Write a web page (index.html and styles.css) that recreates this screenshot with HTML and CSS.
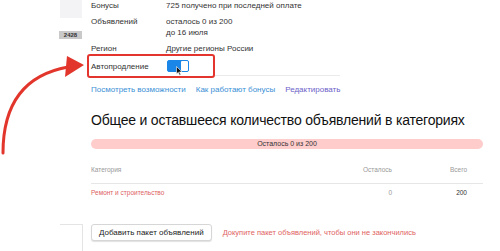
FILE: index.html
```html
<!DOCTYPE html>
<html lang="ru">
<head>
    <meta charset="UTF-8">
    <title>Пакет объявлений</title>
    <link rel="stylesheet" href="styles.css">
</head>
<body>
    <div class="sidebar">
        <div class="side-block"></div>
        <div class="side-badge">2428</div>
        <div class="side-frame"></div>
    </div>

    <div class="main">
        <div class="info">
            <div class="info-row">
                <div class="info-label">Бонусы</div>
                <div class="info-value">725 получено при последней оплате</div>
            </div>
            <div class="info-row">
                <div class="info-label">Объявлений</div>
                <div class="info-value">осталось 0 из 200<br>до 16 июля</div>
            </div>
            <div class="info-row">
                <div class="info-label">Регион</div>
                <div class="info-value">Другие регионы России</div>
            </div>
            <div class="info-row autoprolong">
                <div class="info-label">Автопродление</div>
                <div class="toggle">
                    <span class="toggle-knob"></span>
                    <svg class="cursor" width="7" height="10" viewBox="0 0 7 10">
                        <path d="M0.5 0.5 L0.5 8 L2.3 6.3 L3.6 9.3 L4.8 8.8 L3.5 5.9 L6 5.9 Z" fill="#111" stroke="#fff" stroke-width="0.6"/>
                    </svg>
                </div>
            </div>
            <div class="info-line"></div>
        </div>

        <div class="links">
            <a href="#" class="link">Посмотреть возможности</a>
            <a href="#" class="link">Как работают бонусы</a>
            <a href="#" class="link visited">Редактировать</a>
        </div>

        <h2 class="title">Общее и оставшееся количество объявлений в категориях</h2>

        <div class="bar">Осталось 0 из 200</div>

        <div class="table">
            <div class="table-head">
                <span class="col-name">Категория</span>
                <span class="col-left">Осталось</span>
                <span class="col-total">Всего</span>
            </div>
            <div class="table-row">
                <span class="col-name category">Ремонт и строительство</span>
                <span class="col-left">0</span>
                <span class="col-total total">200</span>
            </div>
        </div>

        <div class="actions">
            <button class="add-button">Добавить пакет объявлений</button>
            <a href="#" class="buy-link">Докупите пакет объявлений, чтобы они не закончились</a>
        </div>
    </div>

    <svg class="arrow" width="100" height="160" viewBox="0 0 100 160">
        <path d="M3 153 C 3 112, 18 76, 68 67" fill="none" stroke="#e2362c" stroke-width="3" stroke-linecap="round"/>
        <polygon points="84,65 67,56 65,77" fill="#e2362c"/>
    </svg>
</body>
</html>
```

FILE: styles.css
```css
body {
    font-family: 'Liberation Sans', Arial, sans-serif;
    margin: 0;
    display: flex;
    height: 251px;
    background: #fff;
    color: #333;
    overflow: hidden;
}

.sidebar {
    width: 91px;
    flex-shrink: 0;
    display: flex;
    flex-direction: column;
}

.side-block {
    margin-left: 60px;
    width: 22px;
    height: 18px;
    background-color: #f3f3f6;
}

.side-badge {
    margin: 13px 0 0 59px;
    width: 23px;
    height: 8px;
    line-height: 8px;
    font-size: 6px;
    font-weight: bold;
    text-align: center;
    background-color: #c9c9c9;
    color: #333;
}

.side-frame {
    margin: auto 0 0 60px;
    width: 22px;
    height: 26px;
    border-top: 1px solid #e4e4e4;
    border-right: 1px solid #e4e4e4;
}

.main {
    width: 392px;
    display: flex;
    flex-direction: column;
}

.info {
    display: flex;
    flex-direction: column;
    gap: 5px;
    font-size: 8px;
    line-height: 11px;
}

.info-row {
    display: flex;
}

.info-label {
    width: 75px;
    flex-shrink: 0;
}

.autoprolong {
    position: relative;
    z-index: 1;
    margin: -5px 0 0 -4px;
    width: 122px;
    height: 20px;
    align-items: center;
    padding-left: 2px;
    border: 2px solid #e3352d;
    border-radius: 3px;
    background: #fff;
}

.autoprolong .info-label {
    width: 76px;
}

.info-line {
    width: 249px;
    height: 1px;
    margin-top: -8px;
    background-color: #ebebeb;
}

.toggle {
    position: relative;
    width: 20px;
    height: 10px;
    border: 1px solid #1a86e8;
    border-radius: 2px;
    background-color: #1a86e8;
}

.toggle-knob {
    position: absolute;
    right: 0;
    top: 0;
    width: 7px;
    height: 10px;
    border-radius: 1px;
    background: #fff;
}

.cursor {
    position: absolute;
    left: 8px;
    top: 5px;
}

.links {
    display: flex;
    gap: 10px;
    margin-top: 8px;
    font-size: 8px;
    line-height: 11px;
}

.link {
    color: #3b8fd6;
    text-decoration: none;
}

.link.visited {
    color: #6d62c9;
}

.title {
    margin: 16px 0 0 0;
    font-size: 14px;
    letter-spacing: -0.2px;
    line-height: 18px;
    font-weight: normal;
    color: #111;
    white-space: nowrap;
}

.bar {
    margin-top: 10px;
    height: 10px;
    line-height: 10px;
    border-radius: 5px;
    background-color: #ffcccc;
    text-align: center;
    font-size: 7px;
    color: #333;
}

.table {
    margin-top: 16px;
    font-size: 6.5px;
}

.table-head, .table-row {
    display: flex;
    padding-right: 16px;
}

.table-head {
    height: 18px;
    line-height: 10px;
    color: #999;
    border-bottom: 1px solid #e6e6e6;
}

.table-row {
    padding-top: 4px;
    line-height: 10px;
    color: #999;
}

.col-name {
    flex: 1;
}

.col-left {
    width: 80px;
    text-align: right;
}

.col-total {
    width: 75px;
    text-align: right;
}

.category {
    color: #dd5f5f;
}

.total {
    color: #333;
}

.actions {
    margin-top: 26px;
    display: flex;
    align-items: center;
    gap: 11px;
}

.add-button {
    font-family: inherit;
    height: 17px;
    padding: 0 7px;
    font-size: 8px;
    color: #222;
    background: #fff;
    border: 1px solid #d6d6d6;
    border-radius: 3px;
    box-shadow: 0 1px 1px rgba(0, 0, 0, 0.12);
}

.buy-link {
    font-size: 7.5px;
    color: #e06262;
    text-decoration: none;
}

.arrow {
    position: absolute;
    left: 0;
    top: 0;
}
```
